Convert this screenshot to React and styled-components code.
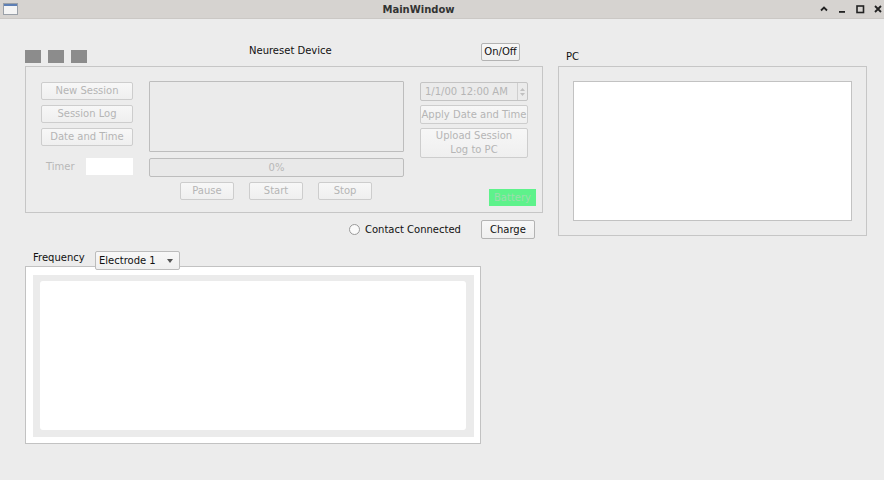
import React from 'react';
import styled, { createGlobalStyle } from 'styled-components';

const GlobalStyle = createGlobalStyle`
  html, body {
    margin: 0;
    padding: 0;
    background: #ececec;
    font-family: "DejaVu Sans", "Liberation Sans", sans-serif;
    font-size: 10px;
    color: #111;
  }
`;

const Window = styled.div`
  width: 884px;
  height: 480px;
  display: flex;
  flex-direction: column;
  background: #ececec;
  overflow: hidden;
`;

const TitleBar = styled.div`
  height: 18px;
  background: #d6d3d0;
  border-bottom: 1px solid #cbc8c5;
  display: flex;
  align-items: center;
  padding: 0 1px 0 3px;
  .title {
    flex: 1;
    text-align: center;
    font-weight: bold;
    color: #333;
    font-size: 10px;
  }
`;

const WinControls = styled.div`
  display: flex;
  align-items: center;
  gap: 8px;
  svg {
    display: block;
  }
`;

const Content = styled.div`
  display: flex;
  padding: 24px 0 0 25px;
  gap: 15px;
`;

const LeftColumn = styled.div`
  width: 518px;
  display: flex;
  flex-direction: column;
`;

const RightColumn = styled.div`
  width: 309px;
  display: flex;
  flex-direction: column;
  .label {
    margin: 8px 0 0 8px;
    height: 15px;
  }
`;

const HeaderRow = styled.div`
  height: 23px;
  display: flex;
  align-items: flex-start;
  .device-title {
    margin: 2px 0 0 162px;
  }
`;

const Squares = styled.div`
  display: flex;
  gap: 7px;
  margin-top: 7px;
  span {
    width: 16px;
    height: 13px;
    background: #8c8c8c;
  }
`;

const Button = styled.div`
  box-sizing: border-box;
  height: ${(p) => p.h || 18}px;
  width: ${(p) => (p.w ? `${p.w}px` : 'auto')};
  padding: 0 ${(p) => (p.tight ? 0 : 5)}px;
  border: 1px solid ${(p) => (p.disabled ? '#cdcdcd' : '#b3b3b3')};
  border-radius: 2px;
  background: linear-gradient(#f7f7f7, #efefef);
  color: ${(p) => (p.disabled ? '#b5b5b5' : '#111')};
  display: flex;
  align-items: center;
  justify-content: center;
  text-align: center;
  line-height: 14px;
  white-space: nowrap;
`;

const OnOff = styled(Button)`
  margin-left: auto;
  margin-right: 23px;
`;

const Frame = styled.div`
  box-sizing: border-box;
  border: 1px solid #c6c6c6;
  background: ${(p) => p.bg || 'transparent'};
`;

const DeviceFrame = styled(Frame)`
  height: 147px;
  display: flex;
  padding: 14px 7px 6px 15px;
  gap: 16px;
`;

const ColOne = styled.div`
  width: 92px;
  display: flex;
  flex-direction: column;
  gap: 5px;
  padding-top: 1px;
`;

const TimerRow = styled.div`
  display: flex;
  align-items: center;
  margin-top: 7px;
  color: #b8b8b8;
  span {
    margin-left: 5px;
    width: 40px;
  }
  div {
    width: 47px;
    height: 17px;
    background: #fff;
  }
`;

const ColTwo = styled.div`
  width: 255px;
  display: flex;
  flex-direction: column;
`;

const Display = styled.div`
  box-sizing: border-box;
  height: 71px;
  border: 1px solid #bdbdbd;
  border-radius: 1px;
  background: #ebebeb;
`;

const Progress = styled.div`
  box-sizing: border-box;
  margin-top: 6px;
  height: 19px;
  border: 1px solid #bdbdbd;
  border-radius: 2px;
  background: #e9e9e9;
  color: #b8b8b8;
  display: flex;
  align-items: center;
  justify-content: center;
`;

const ControlRow = styled.div`
  display: flex;
  gap: 15px;
  margin: 5px 0 0 31px;
`;

const ColThree = styled.div`
  width: 108px;
  display: flex;
  flex-direction: column;
  padding-top: 1px;
  gap: 4px;
`;

const DateEdit = styled.div`
  box-sizing: border-box;
  height: 19px;
  border: 1px solid #c4c4c4;
  border-radius: 2px;
  background: #ebebeb;
  color: #b5b5b5;
  display: flex;
  align-items: center;
  .value {
    flex: 1;
    padding-left: 4px;
  }
  .spin {
    width: 9px;
    height: 100%;
    border-left: 1px solid #cfcfcf;
    display: flex;
    flex-direction: column;
    align-items: center;
    justify-content: center;
    gap: 2px;
  }
`;

const Battery = styled.div`
  margin: auto -8px 0 auto;
  width: 47px;
  height: 17px;
  background: #5ef28b;
  color: #9fdcae;
  display: flex;
  align-items: center;
  justify-content: center;
`;

const StatusRow = styled.div`
  display: flex;
  align-items: center;
  margin-top: 7px;
  height: 19px;
  .contact {
    margin-left: 324px;
    display: flex;
    align-items: center;
    gap: 5px;
  }
`;

const Radio = styled.span`
  box-sizing: border-box;
  width: 11px;
  height: 11px;
  border-radius: 50%;
  border: 1px solid #9a9a9a;
  background: #fafafa;
`;

const ChargeButton = styled(Button)`
  margin-left: 20px;
`;

const FreqHeader = styled.div`
  display: flex;
  align-items: center;
  margin-top: 12px;
  margin-bottom: -4px;
  height: 19px;
  position: relative;
  z-index: 1;
  .freq {
    margin: -6px 0 0 8px;
    width: 62px;
  }
`;

const Combo = styled.div`
  box-sizing: border-box;
  width: 85px;
  height: 19px;
  border: 1px solid #bcbcbc;
  border-radius: 2px;
  background: linear-gradient(#f8f8f8, #efefef);
  display: flex;
  align-items: center;
  padding: 0 6px 0 3px;
  color: #111;
  span {
    flex: 1;
  }
`;

const FreqFrame = styled(Frame)`
  width: 456px;
  height: 178px;
  padding: 8px 6px 6px 7px;
  border-color: #c2c2c2;
`;

const Band = styled.div`
  height: 100%;
  background: #ebebeb;
  padding: 6px 8px 7px 7px;
  box-sizing: border-box;
`;

const Plot = styled.div`
  height: 100%;
  background: #fff;
  border-radius: 3px;
`;

const PcFrame = styled(Frame)`
  height: 170px;
  padding: 14px;
`;

const PcScreen = styled.div`
  height: 100%;
  box-sizing: border-box;
  border: 1px solid #c2c2c2;
  background: #fff;
`;

const Arrow = ({ up }) => (
  <svg width="5" height="3" viewBox="0 0 5 3">
    <path d={up ? 'M0 3 L2.5 0 L5 3 Z' : 'M0 0 L2.5 3 L5 0 Z'} fill="#c0c0c0" />
  </svg>
);

function App() {
  return (
    <Window>
      <GlobalStyle />
      <TitleBar>
        <svg width="15" height="12" viewBox="0 0 15 12">
          <rect x="0.5" y="0.5" width="14" height="11" fill="#f4f4f4" stroke="#9aa0a8" />
          <rect x="1" y="1" width="13" height="2" fill="#5d7fb5" />
        </svg>
        <div className="title">MainWindow</div>
        <WinControls>
          <svg width="10" height="10" viewBox="0 0 10 10">
            <path d="M2 6.5 L5 3.5 L8 6.5" stroke="#222" strokeWidth="1.8" fill="none" />
          </svg>
          <svg width="10" height="10" viewBox="0 0 10 10">
            <rect x="2" y="7" width="6" height="1.8" fill="#222" />
          </svg>
          <svg width="10" height="10" viewBox="0 0 10 10">
            <rect x="2" y="2" width="6.5" height="6.5" stroke="#222" strokeWidth="1.6" fill="none" />
          </svg>
          <svg width="10" height="10" viewBox="0 0 10 10">
            <path d="M2 2 L8 8 M8 2 L2 8" stroke="#222" strokeWidth="1.8" />
          </svg>
        </WinControls>
      </TitleBar>

      <Content>
        <LeftColumn>
          <HeaderRow>
            <Squares>
              <span />
              <span />
              <span />
            </Squares>
            <div className="device-title">Neureset Device</div>
            <OnOff w={39}>On/Off</OnOff>
          </HeaderRow>

          <DeviceFrame>
            <ColOne>
              <Button disabled>New Session</Button>
              <Button disabled>Session Log</Button>
              <Button disabled>Date and Time</Button>
              <TimerRow>
                <span>Timer</span>
                <div />
              </TimerRow>
            </ColOne>
            <ColTwo>
              <Display />
              <Progress>0%</Progress>
              <ControlRow>
                <Button disabled w={54}>Pause</Button>
                <Button disabled w={54}>Start</Button>
                <Button disabled w={54}>Stop</Button>
              </ControlRow>
            </ColTwo>
            <ColThree>
              <DateEdit>
                <span className="value">1/1/00 12:00 AM</span>
                <span className="spin">
                  <Arrow up />
                  <Arrow />
                </span>
              </DateEdit>
              <Button disabled tight h={19}>Apply Date and Time</Button>
              <Button disabled h={30}>Upload Session<br />Log to PC</Button>
              <Battery>Battery</Battery>
            </ColThree>
          </DeviceFrame>

          <StatusRow>
            <div className="contact">
              <Radio />
              <span>Contact Connected</span>
            </div>
            <ChargeButton w={54} h={19}>Charge</ChargeButton>
          </StatusRow>

          <FreqHeader>
            <span className="freq">Frequency</span>
            <Combo>
              <span>Electrode 1</span>
              <svg width="6" height="4" viewBox="0 0 6 4">
                <path d="M0 0 L3 4 L6 0 Z" fill="#555" />
              </svg>
            </Combo>
          </FreqHeader>
          <FreqFrame bg="#fff">
            <Band>
              <Plot />
            </Band>
          </FreqFrame>
        </LeftColumn>

        <RightColumn>
          <div className="label">PC</div>
          <PcFrame>
            <PcScreen />
          </PcFrame>
        </RightColumn>
      </Content>
    </Window>
  );
}

export default App;
